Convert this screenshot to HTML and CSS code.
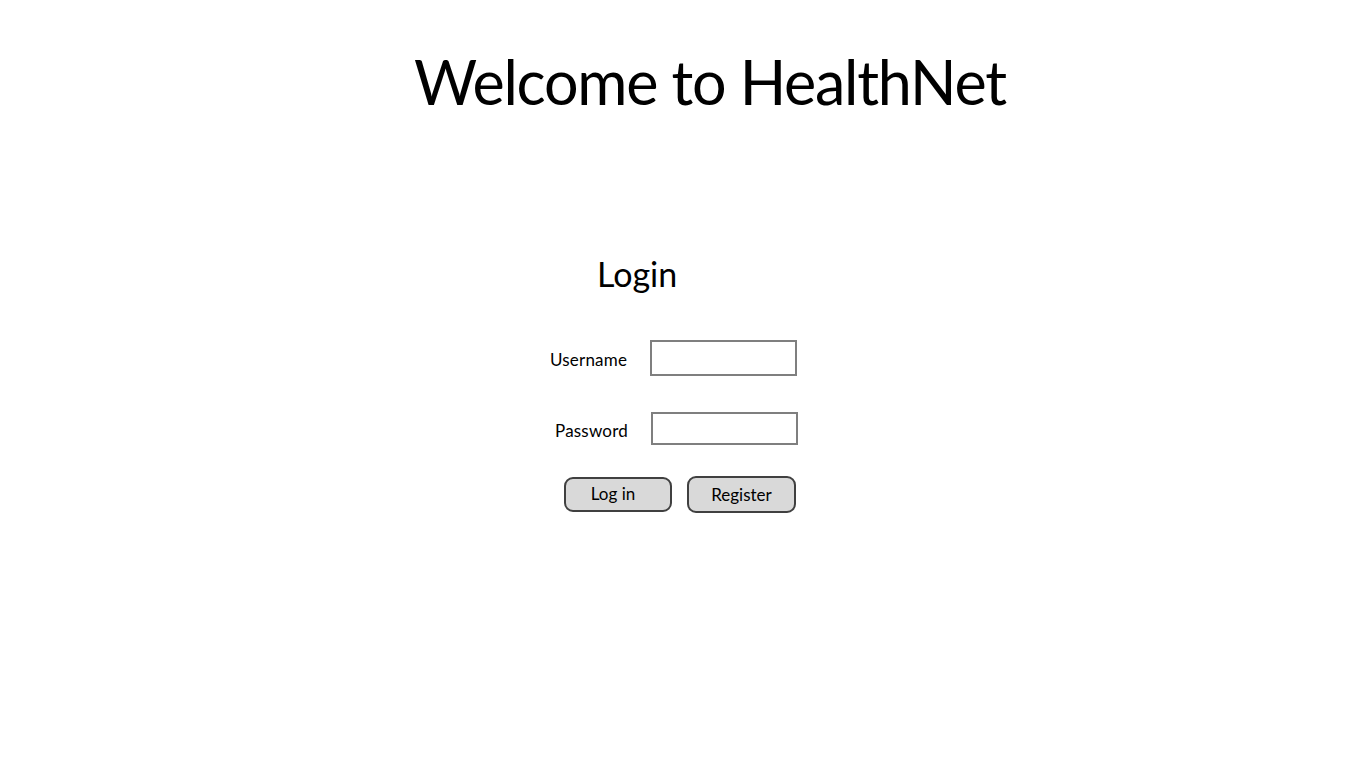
FILE: index.html
```html
<!DOCTYPE html>
<html lang="en">
<head>
<meta charset="utf-8">
<title>HealthNet</title>
<link rel="stylesheet" href="styles.css">
</head>
<body>
<h1 class="title">Welcome to HealthNet</h1>
<form class="login" onsubmit="return false">
  <h2 class="login-heading">Login</h2>
  <div class="field field-user">
    <label class="field-label" for="username">Username</label>
    <input class="field-input" id="username" type="text">
  </div>
  <div class="field field-pass">
    <label class="field-label" for="password">Password</label>
    <input class="field-input" id="password" type="password">
  </div>
  <div class="actions">
    <button class="btn btn-login" type="submit">Log in</button>
    <button class="btn btn-register" type="button">Register</button>
  </div>
</form>
</body>
</html>
```

FILE: styles.css
```css
html, body {
  margin: 0;
  padding: 0;
  background: #ffffff;
}
body {
  width: 1366px;
  height: 768px;
  overflow: hidden;
  font-family: Lato, "Open Sans", sans-serif;
  color: #000;
}
.title {
  margin: 0;
  padding: 51px 0 0 414px;
  font-size: 61px;
  line-height: 61px;
  letter-spacing: -1.25px;
  font-weight: 400;
  white-space: nowrap;
}
.login {
  margin: 145px 0 0 550px;
  width: 260px;
}
.login-heading {
  margin: 0 0 0 47px;
  font-size: 34px;
  line-height: 33px;
  font-weight: 400;
}
.field {
  display: flex;
  align-items: center;
}
.field-user {
  margin-top: 50px;
  height: 36px;
}
.field-pass {
  margin-top: 36px;
  height: 33px;
  padding-left: 5px;
}
.field-label {
  font-size: 17px;
  letter-spacing: 0.2px;
  width: 100px;
  padding-top: 3px;
}
.field-pass .field-label {
  width: 96px;
}
.field-input {
  box-sizing: border-box;
  width: 147px;
  height: 100%;
  margin: 0;
  border: 2px solid #7f7f7f;
  background: #fff;
  padding: 0 6px;
  font: inherit;
  outline: none;
}
.actions {
  margin-top: 31px;
  height: 37px;
  display: flex;
  align-items: center;
  padding-left: 14px;
  gap: 15px;
}
.btn {
  box-sizing: border-box;
  border: 2px solid #404040;
  border-radius: 9px;
  background: #d9d9d9;
  font-family: inherit;
  font-size: 17px;
  color: #000;
  padding: 0;
}
.btn-login {
  width: 108px;
  height: 35px;
  padding-right: 10px;
  padding-bottom: 3px;
}
.btn-register {
  width: 109px;
  height: 37px;
}
```
